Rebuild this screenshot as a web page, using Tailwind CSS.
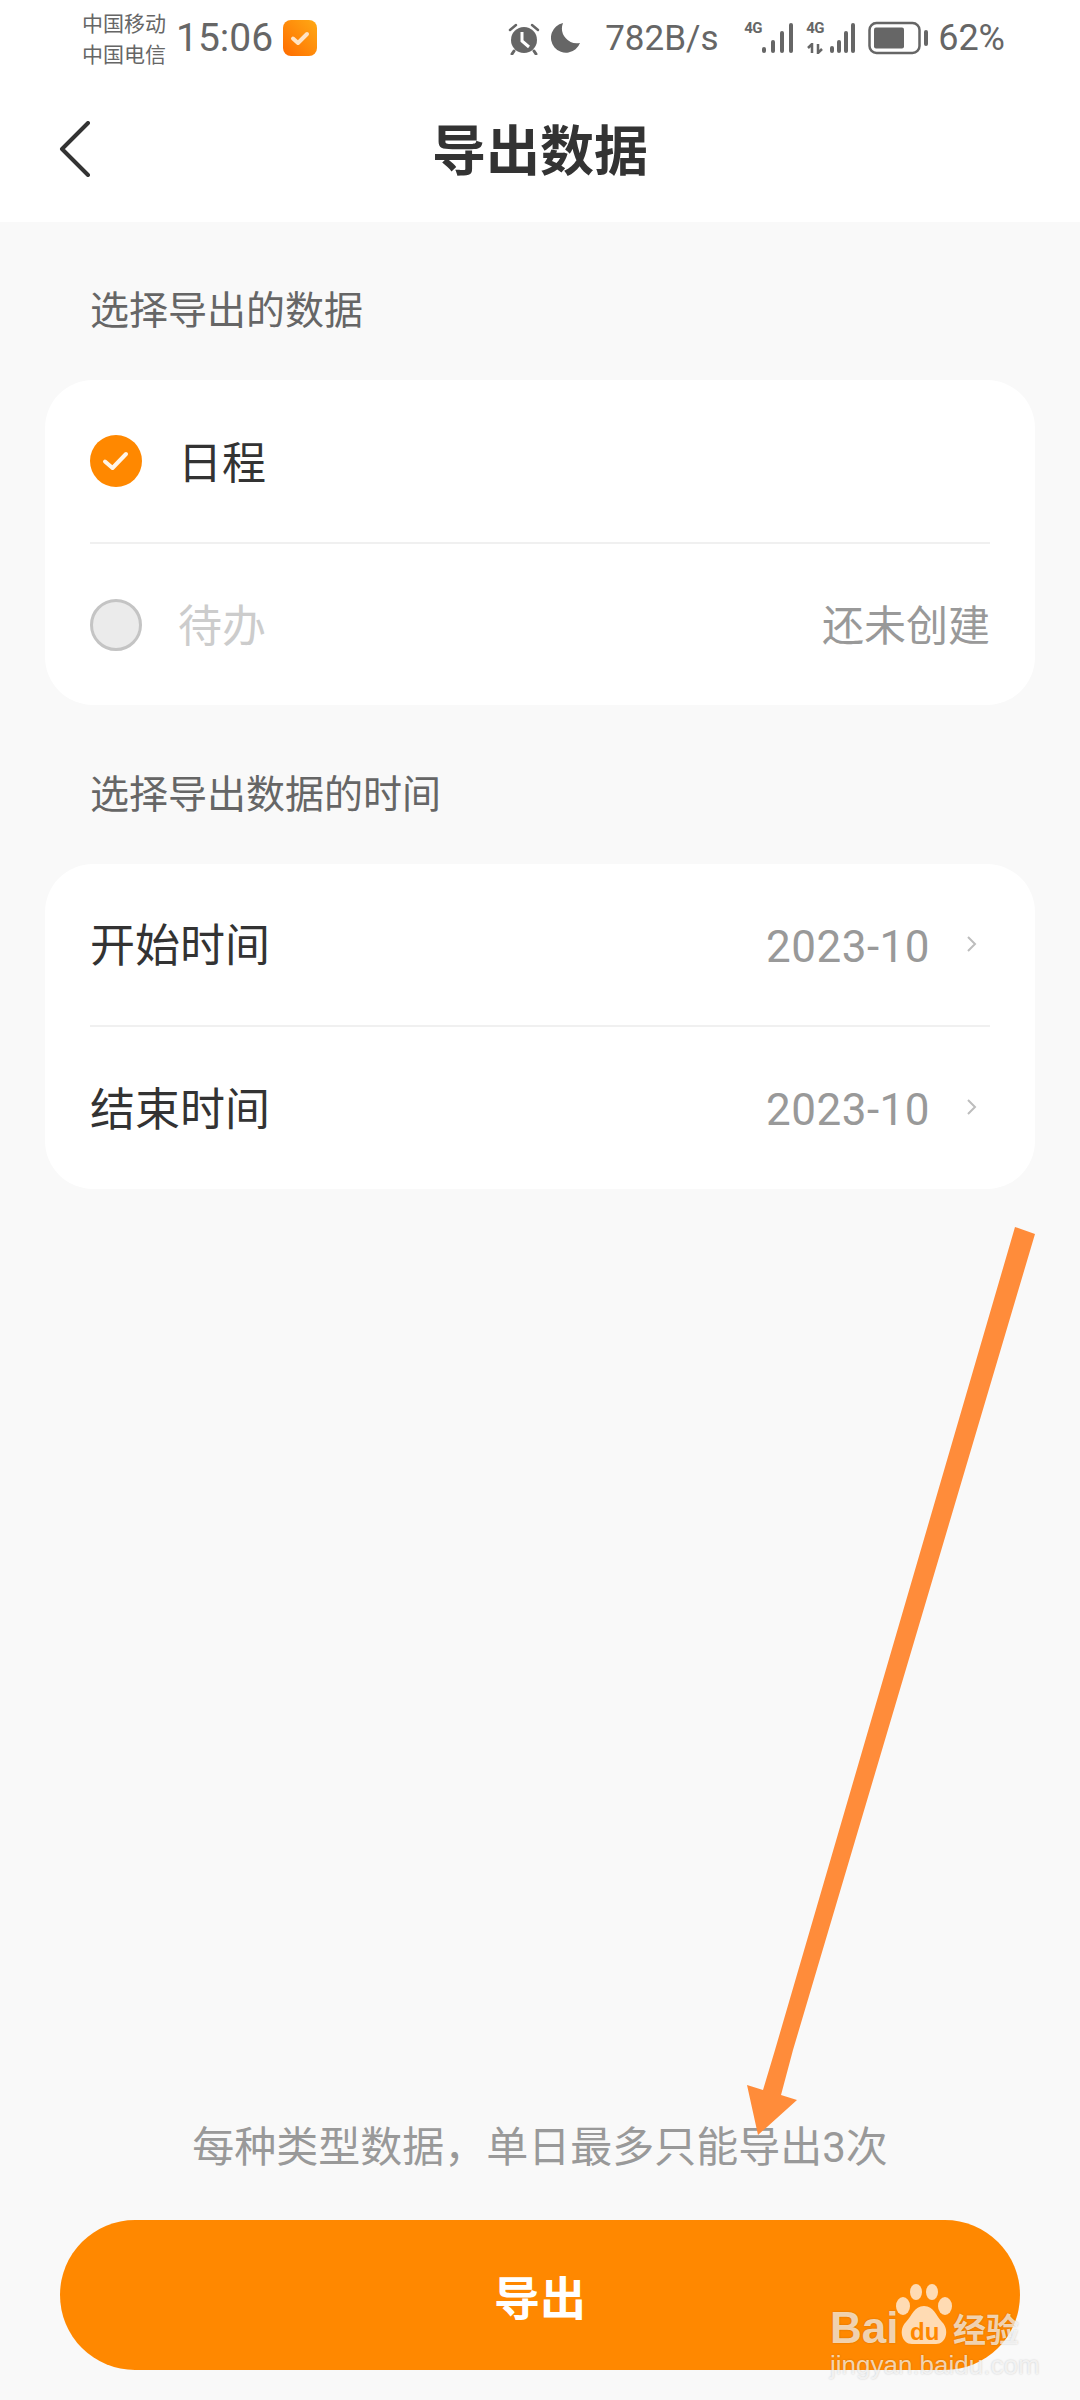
<!doctype html>
<html lang="zh-CN">
<head>
<meta charset="utf-8">
<script src="https://cdn.jsdelivr.net/npm/@tailwindcss/browser@4"></script>
</head>
<body class="m-0">
<div class="relative w-[1080px] h-[2400px] overflow-hidden flex flex-col bg-[#f9f9f9] font-['Roboto','Noto_Sans_CJK_SC',sans-serif] text-[#333333]">
  <!-- header -->
  <header class="bg-white h-[222px] shrink-0 flex flex-col">
    <div class="h-[76px] flex items-center pl-[82px] pr-[75px] text-[#666666]">
      <div class="flex flex-col w-[86px] text-[21px] leading-[31px] font-['Noto_Sans_CJK_SC',sans-serif] whitespace-nowrap"><span>中国移动</span><span>中国电信</span></div>
      <span class="ml-[8px] text-[39px] leading-none">15:06</span>
      <div class="ml-[10px] w-[34px] h-[36px] rounded-[8px] bg-gradient-to-tr from-[#ff6a00] to-[#ffa914] flex items-center justify-center">
        <svg width="22" height="18" viewBox="0 0 22 18" fill="none"><path d="M4 9.5 L9 14 L18 5" stroke="#ffe3c4" stroke-width="4" stroke-linecap="round" stroke-linejoin="round"/></svg>
      </div>
      <div class="ml-auto flex items-center">
        <svg width="32" height="32" viewBox="0 0 32 32" class="mt-[2px]"><circle cx="16" cy="17" r="13" fill="#666"/><path d="M2 7 L8 2 M30 7 L24 2" stroke="#666" stroke-width="2.5" stroke-linecap="round"/><path d="M6 28 L4 31 M26 28 L28 31" stroke="#666" stroke-width="3" stroke-linecap="round"/><path d="M14 9 V18 L21 24" stroke="#fff" stroke-width="3" fill="none"/></svg>
        <svg width="30" height="32" viewBox="0 0 30 32" class="ml-[11px]"><path d="M12 1 A15 15 0 1 0 29 21 A15 15 0 0 1 12 1 Z" fill="#666"/></svg>
        <span class="ml-[24px] w-[114px] text-[35px] leading-none whitespace-nowrap">782B/s</span>
        <div class="ml-[25px] flex h-[32px] w-[50px] relative">
          <span class="absolute left-0 -top-[1px] text-[15px] leading-none font-bold tracking-[-0.5px]">4G</span>
          <svg class="absolute right-0 top-0" width="32" height="32" viewBox="0 0 32 32"><g fill="#666"><rect x="0" y="25" width="4" height="6" rx="2"/><rect x="9" y="18" width="4" height="13" rx="2"/><rect x="18" y="9" width="4" height="22" rx="2"/><rect x="27" y="1" width="4" height="30" rx="2"/></g></svg>
        </div>
        <div class="ml-[12px] flex h-[32px] w-[50px] relative">
          <span class="absolute left-0 -top-[1px] text-[15px] leading-none font-bold tracking-[-0.5px]">4G</span>
          <svg class="absolute left-0 bottom-0" width="18" height="11" viewBox="0 0 18 11"><path d="M6 10 V1 L2 5 M12 1 V10 L16 6" stroke="#666" stroke-width="2.5" fill="none"/></svg>
          <svg class="absolute right-0 top-0" width="26" height="32" viewBox="0 0 26 32"><g fill="#666"><rect x="0" y="24" width="4" height="7" rx="2"/><rect x="7" y="18" width="4" height="13" rx="2"/><rect x="14" y="9" width="4" height="22" rx="2"/><rect x="21" y="1" width="4" height="30" rx="2"/></g></svg>
        </div>
        <svg width="60" height="34" viewBox="0 0 60 34" class="ml-[12px]"><rect x="1.5" y="2" width="50" height="30" rx="7" fill="none" stroke="#666" stroke-width="2.5"/><rect x="6" y="6.5" width="30" height="21" rx="2" fill="#666"/><rect x="56" y="9" width="4" height="16" rx="2" fill="#666"/></svg>
        <span class="ml-[10px] text-[36px] leading-none">62%</span>
      </div>
    </div>
    <div class="relative flex-1 flex items-center justify-center -mt-[1px]">
      <svg class="absolute left-[59px] top-[46px]" width="32" height="56" viewBox="0 0 32 56" fill="none"><path d="M29 2 L3 28 L29 54" stroke="#333" stroke-width="4" stroke-linecap="round" stroke-linejoin="round"/></svg>
      <h1 class="text-[54px] leading-none font-bold font-['Noto_Sans_CJK_SC',sans-serif] -mt-[2px]">导出数据</h1>
    </div>
  </header>

  <main class="flex-1 flex flex-col px-[45px]">
    <p class="mt-[65px] ml-[45px] h-[48px] text-[39px] leading-[48px] text-[#666666]">选择导出的数据</p>
    <section class="mt-[45px] bg-white rounded-[48px] h-[325px] px-[45px] flex flex-col">
      <div class="h-[164px] flex items-center border-b-2 border-[#f0f0f0]">
        <span class="w-[52px] h-[52px] rounded-full bg-[#ff8800] flex items-center justify-center">
          <svg width="28" height="22" viewBox="0 0 28 22" fill="none"><path d="M3 11.5 L10.5 18 L24 4" stroke="#fff5e8" stroke-width="4" stroke-linecap="round" stroke-linejoin="round"/></svg>
        </span>
        <span class="ml-[36px] pt-[5px] text-[44px] leading-none">日程</span>
      </div>
      <div class="flex-1 flex items-center">
        <span class="w-[52px] h-[52px] rounded-full bg-[#ebebeb] border-[3px] border-[#c4c4c4]"></span>
        <span class="ml-[36px] pt-[5px] text-[44px] leading-none text-[#cccccc]">待办</span>
        <span class="ml-auto pt-[5px] text-[42px] leading-none text-[#999999]">还未创建</span>
      </div>
    </section>

    <p class="mt-[66px] ml-[45px] h-[48px] text-[39px] leading-[48px] text-[#666666]">选择导出数据的时间</p>
    <section class="mt-[45px] bg-white rounded-[48px] h-[325px] pl-[45px] flex flex-col">
      <div class="h-[163px] flex items-center border-b-2 border-[#f0f0f0] mr-[45px]">
        <span class="pt-[4px] text-[45px] leading-none">开始时间</span>
        <span class="ml-auto pt-[4px] text-[44px] leading-none text-[#999999] tracking-[0.5px]">2023-10</span>
        <svg class="ml-[36px] mr-[12px] -mt-[2px]" width="12" height="18" viewBox="0 0 12 18" fill="none"><path d="M2 2 L9 9 L2 16" stroke="#bdbdbd" stroke-width="2"/></svg>
      </div>
      <div class="flex-1 flex items-center mr-[45px]">
        <span class="pt-[4px] text-[45px] leading-none">结束时间</span>
        <span class="ml-auto pt-[4px] text-[44px] leading-none text-[#999999] tracking-[0.5px]">2023-10</span>
        <svg class="ml-[36px] mr-[12px] -mt-[2px]" width="12" height="18" viewBox="0 0 12 18" fill="none"><path d="M2 2 L9 9 L2 16" stroke="#bdbdbd" stroke-width="2"/></svg>
      </div>
    </section>

    <div class="mt-auto flex flex-col items-center pb-[30px]">
      <p class="text-[42px] leading-none text-[#999999] whitespace-nowrap">每种类型数据&#xFF0C;单日最多只能导出3次</p>
      <button class="mt-[51px] w-[960px] h-[150px] rounded-full bg-[#ff8800] text-white text-[46px] font-bold font-['Noto_Sans_CJK_SC',sans-serif]">导出</button>
    </div>
  </main>

  <!-- annotation arrow drawn over the page -->
  <svg class="absolute inset-0" width="1080" height="2400" viewBox="0 0 1080 2400"><path d="M1015 1227 L1035 1234 L793 2050 L781 2095 L797 2100 L758 2135 L747 2085 L763 2090 L775 2050 Z" fill="#ff8c3a"/></svg>

  <!-- Baidu watermark -->
  <div class="absolute left-[830px] top-[2284px] w-[195px] h-[96px] text-white/70 [text-shadow:0_0_2px_rgba(0,0,0,0.2)]">
    <span class="absolute left-0 top-[22px] text-[44px] leading-none font-bold font-['Liberation_Sans',sans-serif]">Bai</span>
    <svg class="absolute left-[66px] top-0" width="56" height="62" viewBox="0 0 56 62" fill="#ffffff" fill-opacity="0.7"><ellipse cx="20" cy="8" rx="6" ry="8"/><ellipse cx="36" cy="8" rx="6" ry="8"/><ellipse cx="7" cy="22" rx="7" ry="9"/><ellipse cx="49" cy="22" rx="7" ry="9"/><path d="M28 22 C38 22 40 32 46 38 C54 46 50 60 40 60 L16 60 C6 60 2 46 10 38 C16 32 18 22 28 22 Z"/></svg>
    <span class="absolute left-[80px] top-[36px] text-[24px] leading-none font-bold text-[#ff8800] [text-shadow:none] font-['Liberation_Sans',sans-serif]">du</span>
    <span class="absolute left-[123px] top-[28px] text-[33px] leading-none font-bold whitespace-nowrap font-['Noto_Sans_CJK_SC',sans-serif]">经验</span>
    <span class="absolute left-0 top-[68px] text-[26px] leading-none whitespace-nowrap font-['Liberation_Sans',sans-serif]">jingyan.baidu.com</span>
  </div>
</div>
</body>
</html>
